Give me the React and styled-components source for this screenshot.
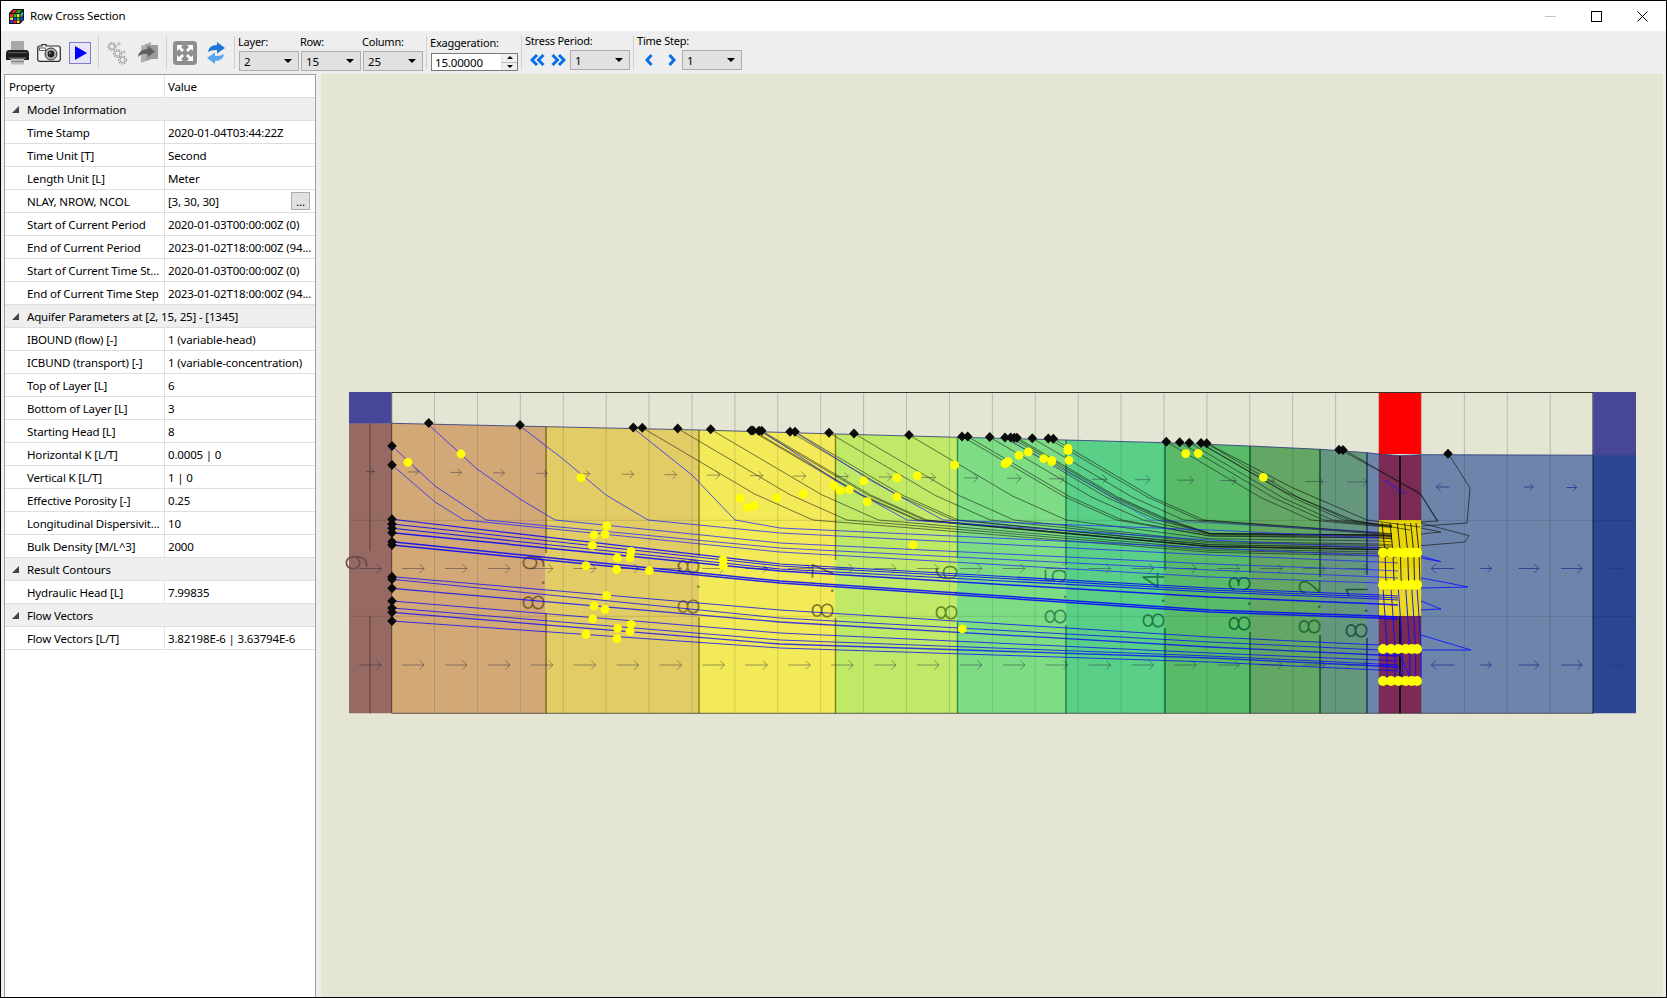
import React from "react";
import styled, { createGlobalStyle } from "styled-components";

const rows = [
  { cat: "Model Information" },
  { k: "Time Stamp", v: "2020-01-04T03:44:22Z" },
  { k: "Time Unit [T]", v: "Second" },
  { k: "Length Unit [L]", v: "Meter" },
  { k: "NLAY, NROW, NCOL", v: "[3, 30, 30]", more: true },
  { k: "Start of Current Period", v: "2020-01-03T00:00:00Z (0)" },
  { k: "End of Current Period", v: "2023-01-02T18:00:00Z (94..." },
  { k: "Start of Current Time St...", v: "2020-01-03T00:00:00Z (0)" },
  { k: "End of Current Time Step", v: "2023-01-02T18:00:00Z (94..." },
  { cat: "Aquifer Parameters at [2, 15, 25] - [1345]" },
  { k: "IBOUND (flow) [-]", v: "1 (variable-head)" },
  { k: "ICBUND (transport) [-]", v: "1 (variable-concentration)" },
  { k: "Top of Layer [L]", v: "6" },
  { k: "Bottom of Layer [L]", v: "3" },
  { k: "Starting Head [L]", v: "8" },
  { k: "Horizontal K [L/T]", v: "0.0005 | 0" },
  { k: "Vertical K [L/T]", v: "1 | 0" },
  { k: "Effective Porosity [-]", v: "0.25" },
  { k: "Longitudinal Dispersivit...", v: "10" },
  { k: "Bulk Density [M/L^3]", v: "2000" },
  { cat: "Result Contours" },
  { k: "Hydraulic Head [L]", v: "7.99835" },
  { cat: "Flow Vectors" },
  { k: "Flow Vectors [L/T]", v: "3.82198E-6 | 3.63794E-6" },
];

// chart geometry, in page pixels
const X0 = 348.7;
const CW = 42.91;
const colX = (i) => X0 + CW * i;
const BOTTOM = 713.3;
const TOP = 392;

const profile = [
  [392, 423.3], [546.7, 426.7], [700, 430], [836.7, 434], [957.7, 437.3], [1066, 440], [1165, 442.7],
  [1250, 446], [1320, 449.3], [1367, 452.7], [1379, 454], [1400, 455.7], [1421, 454.7], [1636, 455.3],
];

const interp = (pts, x) => {
  if (x <= pts[0][0]) return pts[0][1];
  for (let i = 1; i < pts.length; i++) {
    if (x <= pts[i][0]) {
      const [x1, y1] = pts[i - 1];
      const [x2, y2] = pts[i];
      return y1 + ((y2 - y1) * (x - x1)) / (x2 - x1);
    }
  }
  return pts[pts.length - 1][1];
};
const topY = (x) => interp(profile, x);

const zones = [
  { a: 392, b: 545.5, c: "#d3a877" },
  { a: 545.5, b: 699, c: "#e2cc66" },
  { a: 699, b: 835, c: "#f2ea58" },
  { a: 835, b: 957, c: "#c0e968" },
  { a: 957, b: 1066, c: "#7edc85" },
  { a: 1066, b: 1165, c: "#59cf87" },
  { a: 1165, b: 1250, c: "#59bb69" },
  { a: 1250, b: 1320, c: "#62a763" },
  { a: 1320, b: 1367, c: "#65977f" },
  { a: 1367, b: 1379, c: "#6d85ab" },
  { a: 1379, b: 1421, c: "#7a2a55" },
  { a: 1421, b: 1593, c: "#6d85ab" },
  { a: 1593, b: 1636, c: "#2b4690" },
];

const zonePoly = (a, b) => {
  const inner = profile.filter((p) => p[0] > a && p[0] < b);
  const top = [[a, topY(a)], ...inner, [b, topY(b)]];
  return [...top, [b, BOTTOM], [a, BOTTOM]].map((p) => p.join(",")).join(" ");
};

const bounds = [
  { x: 370, g0: 551, g1: 616, c: "#6f4a45" },
  { x: 546, g0: 553, g1: 613, c: "#7d5a20" },
  { x: 699, g0: 556, g1: 617, c: "#8a7a20" },
  { x: 835.5, g0: 560, g1: 618, c: "#7d7d10" },
  { x: 957.5, g0: 558, g1: 622, c: "#3a8a45" },
  { x: 1066, g0: 565, g1: 625, c: "#1f7a40" },
  { x: 1165, g0: 570, g1: 628, c: "#0f6a35" },
  { x: 1250, g0: 573, g1: 632, c: "#0f5a25" },
  { x: 1320, g0: 577, g1: 635, c: "#0f4a25" },
  { x: 1367, g0: 575, g1: 638, c: "#103a55" },
];

const labels = [
  { t: "9", x: 357, y: 558, c: "#6f4a45" },
  { t: "8.9", x: 533.5, y: 578, c: "#7d5a30" },
  { t: "8.8", x: 688.5, y: 582, c: "#857425" },
  { t: "8.7", x: 822.5, y: 586, c: "#7a7a20" },
  { t: "8.6", x: 946.5, y: 588, c: "#5a8a20" },
  { t: "8.5", x: 1055.5, y: 592, c: "#2f8a55" },
  { t: "8.4", x: 1153.5, y: 596, c: "#1f7a45" },
  { t: "8.3", x: 1239.5, y: 599, c: "#0f6a35" },
  { t: "8.2", x: 1309.5, y: 602, c: "#1f6a35" },
  { t: "8.1", x: 1356.5, y: 606, c: "#1f5040" },
];

const arrowList = () => {
  const out = [];
  const shallow = [8, 11, 11, 11, 11, 10, 12, 12, 13, 13, 13, 12, 13, 15, 14, 14, 15, 15, 15, 16, 16, 6, 18, 20];
  shallow.forEach((len, i) => out.push({ i, y: 471.5 + 0.0106 * (colX(i) - 350), len, dir: 1 }));
  [568.5, 665].forEach((y) => {
    for (let i = 0; i < 24; i++) out.push({ i, y, len: 22, dir: 1 });
    out.push({ i: 25, y, len: 23, dir: -1 });
    out.push({ i: 26, y, len: 11, dir: 1 });
    out.push({ i: 27, y, len: 20, dir: 1 });
    out.push({ i: 28, y, len: 21, dir: 1 });
    out.push({ i: 29, y, len: 17, dir: 1 });
  });
  out.push({ i: 25, y: 487, len: 13, dir: -1 });
  out.push({ i: 27, y: 487, len: 9, dir: 1 });
  out.push({ i: 28, y: 487.5, len: 10, dir: 1 });
  out.push({ i: 29, y: 488, len: 6, dir: 1 });
  return out;
};

const leftStarts = [446, 465, 519.3, 524, 528.3, 532.7, 541.7, 545, 576.7, 579.3, 588.3, 601, 608, 612.3, 621];

const topDiamonds = [
  428.7, 520, 633.3, 642.3, 677.7, 710.7, 751, 753, 759, 761.7, 790, 795, 829, 854, 909, 962, 967.7, 989.7, 1005,
  1010.7, 1014.3, 1017, 1032.3, 1048.3, 1053.3, 1166.3, 1179.7, 1189.3, 1201, 1206.7, 1339, 1343, 1448,
];

const dots = [
  [408, 462.3], [461, 454], [581, 477.7], [740.3, 498.3], [747.3, 507.3], [754.3, 505.7], [776.7, 497.7],
  [606.7, 525.7], [594, 535], [605, 534.3], [592.3, 545.3], [631, 551.3], [630, 557.7], [617.3, 558],
  [586, 565.7], [616.7, 569.3], [649.3, 570.7], [723, 560], [723.3, 566],
  [606.7, 595.3], [594, 606], [605, 609.3], [592.7, 619], [631, 624.3], [630, 631.3], [617.7, 628.3],
  [586, 634.3], [617, 638.7],
  [803.3, 494], [834, 485.7], [840, 490.7], [849.3, 489.7], [863.7, 481], [867.3, 501.7], [897, 477.7], [897, 497],
  [917.3, 475.7], [954.7, 465], [913, 545], [962.3, 629], [1005, 463.7], [1008, 461.7], [1019, 455.3], [1028.3, 452],
  [1043.7, 458.7], [1051.7, 460.3], [1051.7, 461.7], [1068, 448.3], [1068, 450.7], [1069, 460.3], [1185.7, 453.7],
  [1198.3, 453.3], [1263.3, 477.3],
];

const wellX = [1383, 1391, 1398.3, 1405.7, 1411.7, 1417];
const wellY = [552.7, 584.7, 649, 681];

const pts = (list) => list.map((p) => p.join(",")).join(" ");

// a long flow line, from its readings at x=780, x=1210 and x=1379, ending inside the well column
const longRun = (head, a, b, c) => [...head, [780, a], [1210, b], [1379, c], [1398, c + 1]];

const upperThin = [
  longRun([[392, 465], [435, 502], [464, 520]], 552, 577, 583),
  longRun([[392, 446], [435, 486], [486, 520]], 548, 570, 577),
  longRun([[429, 425], [477, 469], [520, 499], [555, 520]], 543, 564, 570),
  longRun([[520, 426], [563, 459], [606, 495], [648, 520]], 533, 555, 562),
  longRun([[633, 428], [692, 475], [735, 520]], 528, 548, 556),
];

const thick = [
  longRun([[392, 519.3]], 564, 588, 595),
  longRun([[392, 524]], 566, 590, 597),
  longRun([[392, 528.3]], 569, 592, 599),
  longRun([[392, 532.7]], 571, 597, 604),
  longRun([[392, 541.7]], 581, 610, 616),
  longRun([[392, 545]], 583, 612, 618),
];

const lower = [
  longRun([[392, 576.7]], 610, 637, 645),
  longRun([[392, 579.3]], 618, 642, 650),
  longRun([[392, 588.3]], 622, 647, 655),
  longRun([[392, 601]], 633, 653, 660),
  longRun([[392, 608]], 640, 656, 664),
  longRun([[392, 612.3]], 644, 658, 666),
  longRun([[392, 621]], 648, 662, 670),
];

const blackLines = topDiamonds
  .filter((x) => x > 640 && x < 1300)
  .map((x0) => {
    const y0 = topY(x0) - 1;
    const dy = 520 - y0;
    const k = dy * 1.85;
    const yEnd = 556 - ((x0 - 640) / 570) * 32;
    const line = [
      [x0, y0],
      [x0 + 0.33 * k, y0 + 0.36 * dy],
      [x0 + 0.66 * k, y0 + 0.72 * dy],
      [x0 + k, 520],
    ];
    if (x0 + k < 1180) line.push([1210, 520 + (yEnd - 520) * 0.9]);
    line.push([1379, yEnd], [1392, yEnd + 1]);
    return line;
  });

const blackRight = [
  [[1448, 453], [1470, 488], [1467, 523], [1422, 526]],
  [[1343, 449], [1421, 495], [1438, 521], [1421, 522]],
  [[1339, 449], [1420, 493], [1437, 521]],
  [[1421, 545.7], [1465, 542], [1469, 535.7], [1421, 523]],
  [[1421, 528], [1441, 532], [1421, 534]],
  [[1206, 443], [1293, 488], [1367, 520], [1420, 527]],
  [[1201, 444], [1285, 492], [1355, 521], [1410, 530]],
];

const blueSpikes = [
  [[1421, 556], [1441, 561.7], [1421, 558]],
  [[1421, 578], [1443, 582], [1468, 587], [1421, 588]],
  [[1421, 601], [1441, 609], [1421, 610]],
  [[1421, 635], [1471, 650], [1421, 650]],
  [[1385, 480], [1405, 494]],
  [[1379, 651], [1400, 655], [1409, 675]],
  [[1379, 665], [1398, 667], [1403, 678]],
];

const Chart = () => (
  <ChartSvg viewBox="321 74 1342 923">
    {zones.map((z) => (
      <polygon key={z.a} points={zonePoly(z.a, z.b)} fill={z.c} />
    ))}
    <polygon points={zonePoly(349, 392)} fill="#966a62" />
    <rect x="349" y={TOP} width="43" height="31.5" fill="#474698" />
    <rect x="1593" y={TOP} width="43" height="63" fill="#474698" />
    <rect x="1379" y={TOP} width="42.4" height="62" fill="#ff0000" />
    <rect x="1379" y="520" width="42.4" height="96" fill="#e8d608" />
    <rect x="1379" y="568" width="42.4" height="48" fill="#ffffff" opacity="0.1" />

    {Array.from({ length: 29 }, (_, n) => n + 1).map((n) => (
      <g key={n}>
        <line x1={colX(n)} x2={colX(n)} y1={TOP} y2={topY(colX(n))} stroke="#b9b9ae" />
        <line x1={colX(n)} x2={colX(n)} y1={topY(colX(n))} y2={BOTTOM} stroke="#000" strokeOpacity="0.13" />
      </g>
    ))}
    <line x1="349" x2="1636" y1="520.3" y2="520.3" stroke="#000" strokeOpacity="0.12" />
    <line x1="349" x2="1636" y1="616.3" y2="616.3" stroke="#000" strokeOpacity="0.12" />

    <line x1="1400" x2="1400" y1="456" y2="520" stroke="#111" strokeWidth="2" />
    <line x1="1400" x2="1400" y1="616" y2={BOTTOM} stroke="#111" strokeWidth="2" />

    {bounds.map((b) => (
      <g key={b.x} stroke={b.c} strokeWidth="1.4">
        <line x1={b.x} x2={b.x} y1={topY(b.x)} y2={b.g0} />
        <line x1={b.x} x2={b.x} y1={b.g1} y2={BOTTOM} />
      </g>
    ))}
    {labels.map((l) => (
      <ContourLabel key={l.t} transform={`translate(${l.x} ${l.y}) rotate(-90)`} fill={l.c} stroke={l.c}>
        {l.t}
      </ContourLabel>
    ))}

    {arrowList().map((a, n) => {
      const xc = colX(a.i) + CW / 2;
      const tail = xc - (a.dir * a.len) / 2;
      const tip = xc + (a.dir * a.len) / 2;
      const h = Math.min(4.5, a.len / 3);
      return (
        <path
          key={n}
          d={`M${tail} ${a.y}L${tip} ${a.y}M${tip - a.dir * h} ${a.y - h}L${tip} ${a.y}L${tip - a.dir * h} ${a.y + h}`}
          fill="none"
          stroke={a.i > 24 ? "#25388f" : "#1c1c3c"}
          strokeOpacity={a.i > 24 ? 0.85 : 0.42}
        />
      );
    })}

    <polyline points={pts(profile)} fill="none" stroke="#1d2a74" strokeOpacity="0.75" />
    <rect x="392" y={TOP} width="1201" height="1" fill="#33332c" />
    <line x1="391.7" x2="391.7" y1={TOP} y2={BOTTOM} stroke="#3d3a36" strokeOpacity="0.7" />
    <line x1="1593" x2="1593" y1={TOP} y2={BOTTOM} stroke="#1c2350" />
    <line x1="392" x2="1593" y1={BOTTOM} y2={BOTTOM} stroke="#333" strokeOpacity="0.75" />

    {blackLines.map((l, n) => (
      <polyline key={n} points={pts(l)} fill="none" stroke="#111" strokeOpacity="0.75" strokeWidth="0.75" />
    ))}
    {blackRight.map((l, n) => (
      <polyline key={n} points={pts(l)} fill="none" stroke="#111" strokeOpacity="0.8" strokeWidth="0.8" />
    ))}
    {wellX.map((x) => (
      <g key={x}>
        <polyline points={pts([[x - 1, 523], [x + 2, 552], [x + 3, 585]])} fill="none" stroke="#111" strokeWidth="0.9" />
        <polyline points={pts([[x, 588], [x + 2, 616], [x + 4, 649], [x + 4, 681]])} fill="none" stroke="#0a0aff" strokeWidth="0.9" />
      </g>
    ))}
    {upperThin.map((l, n) => (
      <polyline key={n} points={pts(l)} fill="none" stroke="#2222ff" strokeOpacity="0.85" strokeWidth="0.9" />
    ))}
    <polyline points={pts([[795, 432], [870, 480], [943, 520], [1210, 530], [1379, 538]])} fill="none" stroke="#2222ff" strokeOpacity="0.8" strokeWidth="0.9" />
    <polyline points={pts([[1010, 441], [1100, 490], [1150, 520], [1210, 523], [1379, 532]])} fill="none" stroke="#2222ff" strokeOpacity="0.5" strokeWidth="0.9" />
    <polyline points={pts([[762, 431], [835, 480], [907, 520], [1210, 540], [1379, 548]])} fill="none" stroke="#2222ff" strokeOpacity="0.8" strokeWidth="0.9" />
    {thick.map((l, n) => (
      <polyline key={n} points={pts(l)} fill="none" stroke="#0000ff" strokeWidth={n > 2 ? 1.5 : 1.1} strokeOpacity="0.85" />
    ))}
    {lower.map((l, n) => (
      <polyline key={n} points={pts(l)} fill="none" stroke="#0000ff" strokeWidth={n % 3 === 2 ? 1.3 : 1} strokeOpacity="0.75" />
    ))}
    {blueSpikes.map((l, n) => (
      <polyline key={n} points={pts(l)} fill="none" stroke="#1414ff" strokeWidth="0.9" />
    ))}

    {topDiamonds.map((x) => (
      <polygon key={x} points={`${x},${topY(x) - 6} ${x + 4.8},${topY(x) - 1} ${x},${topY(x) + 4} ${x - 4.8},${topY(x) - 1}`} fill="#0a0a0a" />
    ))}
    {leftStarts.map((y) => (
      <polygon key={y} points={`392,${y - 5} 396.8,${y} 392,${y + 5} 387.2,${y}`} fill="#0a0a0a" />
    ))}
    {dots.map(([x, y], n) => (
      <circle key={n} cx={x} cy={y} r="4.4" fill="#ffff00" />
    ))}
    {wellY.map((y) =>
      wellX.map((x) => <circle key={`${x}-${y}`} cx={x} cy={y} r="5" fill="#ffff00" />)
    )}
  </ChartSvg>
);

const CubeIcon = () => (
  <TitleIcon viewBox="0 0 17 17">
    <path d="M1 5 L5 1 H16 V12 L12 16 H1 Z" fill="#111" />
    <rect x="2" y="6" width="3" height="3" fill="#ff2020" />
    <rect x="5.5" y="6" width="3" height="3" fill="#22c020" />
    <rect x="9" y="6" width="2.5" height="3" fill="#f0e020" />
    <rect x="2" y="9.5" width="3" height="2.5" fill="#f0e020" />
    <rect x="5.5" y="9.5" width="3" height="2.5" fill="#2040e0" />
    <rect x="9" y="9.5" width="2.5" height="2.5" fill="#22c020" />
    <rect x="2" y="12.5" width="3" height="2.5" fill="#2040e0" />
    <rect x="5.5" y="12.5" width="3" height="2.5" fill="#ff2020" />
    <rect x="9" y="12.5" width="2.5" height="2.5" fill="#f0e020" />
    <path d="M3 5 L6 2 H9 L6 5 Z" fill="#ff2020" />
    <path d="M7 5 L10 2 H14 L11.5 5 Z" fill="#20a020" />
    <path d="M12.5 6 L15 3.5 V7 L12.5 9.5 Z" fill="#20c0c0" />
    <path d="M12.5 10.5 L15 8 V11.5 L12.5 14 Z" fill="#2040e0" />
  </TitleIcon>
);

const PrinterIcon = () => (
  <svg width="23" height="24" viewBox="0 0 23 24">
    <rect x="5" y="0" width="13" height="11" fill="#a9a9a9" />
    <path d="M3 9 H20 Q23 9 23 13 V19 H0 V13 Q0 9 3 9 Z" fill="#1d1d1d" />
    <rect x="2" y="11" width="19" height="1.2" fill="#555" />
    <rect x="5" y="18" width="13" height="5.5" fill="#bcbcbc" />
    <rect x="5" y="20" width="13" height="1" fill="#808080" />
    <rect x="3" y="16.5" width="17" height="1.5" fill="#6a6a6a" />
  </svg>
);

const CameraIcon = () => (
  <svg width="24" height="19" viewBox="0 0 24 19">
    <path d="M3 3 H5 V1.5 H9 V3 H21 Q23.3 3 23.3 5 V16 Q23.3 18.3 21 18.3 H3 Q0.7 18.3 0.7 16 V5 Q0.7 3 3 3 Z" fill="#f4f4f4" stroke="#2a2a2a" strokeWidth="1.2" />
    <rect x="2.5" y="5" width="6" height="2.4" fill="#fff" stroke="#444" strokeWidth="0.8" />
    <circle cx="14" cy="11" r="6" fill="#b5b5b5" stroke="#333" />
    <circle cx="14" cy="11" r="3.4" fill="#222" />
    <circle cx="13" cy="10" r="1" fill="#999" />
  </svg>
);

const GearsIcon = () => (
  <svg width="20" height="24" viewBox="0 0 20 24">
    <g fill="none" stroke="#9a9a9a">
      <circle cx="5" cy="5.5" r="2.6" />
      <circle cx="5" cy="5.5" r="4" strokeDasharray="1.6 1.2" strokeWidth="1.2" />
      <circle cx="10.5" cy="12.5" r="2.6" />
      <circle cx="10.5" cy="12.5" r="4" strokeDasharray="1.6 1.2" strokeWidth="1.2" />
      <circle cx="15.5" cy="19" r="2.6" />
      <circle cx="15.5" cy="19" r="4" strokeDasharray="1.6 1.2" strokeWidth="1.2" />
      <path d="M10 3 H14 M12 1 V5" stroke="#b5b5b5" />
      <path d="M15 11 H19 M17 9 V13" stroke="#b5b5b5" />
    </g>
  </svg>
);

const ExportIcon = () => (
  <svg width="21" height="23" viewBox="0 0 21 23">
    <path d="M4 5 L14 1 V18 L4 22 Z" fill="#b0b0b0" />
    <path d="M9 4 H21 V18 H14 L9 20 Z" fill="#9b9b9b" />
    <path d="M1 16 Q2 8 11 8 V5 L18 10.5 L11 16 V13 Q5 12 1 16 Z" fill="#5f5f5f" />
  </svg>
);

const FitIcon = () => (
  <svg width="24" height="24" viewBox="0 0 24 24">
    <rect width="24" height="24" rx="3.5" fill="#8e8e8e" />
    <g fill="#fff">
      <path d="M4 4 H10 L8 6 L11 9 L9 11 L6 8 L4 10 Z" />
      <path d="M20 4 V10 L18 8 L15 11 L13 9 L16 6 L14 4 Z" />
      <path d="M4 20 V14 L6 16 L9 13 L11 15 L8 18 L10 20 Z" />
      <path d="M20 20 H14 L16 18 L13 15 L15 13 L18 16 L20 14 Z" />
    </g>
  </svg>
);

const RefreshIcon = () => (
  <svg width="18" height="22" viewBox="0 0 18 22">
    <path d="M1 10 Q2 3 10 3 V0 L18 6 L10 11.5 V8 Q5 7.5 1 10 Z" fill="#1f74d8" />
    <path d="M17 12 Q16 19 8 19 V22 L0 16 L8 10.5 V14 Q13 14.5 17 12 Z" fill="#58a4ee" />
  </svg>
);

const DoubleLeft = () => (
  <svg width="15" height="12" viewBox="0 0 15 12">
    <path d="M7 1 L2 6 L7 11 M13.5 1 L8.5 6 L13.5 11" fill="none" stroke="#0b6fe8" strokeWidth="3" />
  </svg>
);

const DoubleRight = () => (
  <svg width="15" height="12" viewBox="0 0 15 12">
    <path d="M1.5 1 L6.5 6 L1.5 11 M8 1 L13 6 L8 11" fill="none" stroke="#0b6fe8" strokeWidth="3" />
  </svg>
);

const SingleLeft = () => (
  <svg width="8" height="12" viewBox="0 0 8 12">
    <path d="M6.5 1 L2 6 L6.5 11" fill="none" stroke="#0b6fe8" strokeWidth="3" />
  </svg>
);

const SingleRight = () => (
  <svg width="8" height="12" viewBox="0 0 8 12">
    <path d="M1.5 1 L6 6 L1.5 11" fill="none" stroke="#0b6fe8" strokeWidth="3" />
  </svg>
);

const App = () => {
  return (
    <>
      <GlobalStyle />
      <Window>
        <TitleBar>
          <CubeIcon />
          <TitleText>Row Cross Section</TitleText>
          <WindowButtons>
            <WinBtn>
              <svg width="11" height="11"><rect x="0" y="5" width="11" height="1" fill="#c4c4c4" /></svg>
            </WinBtn>
            <WinBtn>
              <svg width="11" height="11"><rect x="0.5" y="0.5" width="10" height="10" fill="none" stroke="#000" /></svg>
            </WinBtn>
            <WinBtn>
              <svg width="11" height="11"><path d="M0.5 0.5 L10.5 10.5 M10.5 0.5 L0.5 10.5" stroke="#000" fill="none" /></svg>
            </WinBtn>
          </WindowButtons>
        </TitleBar>

        <Toolbar>
          <ToolSlot $left={0}><PrinterIcon /></ToolSlot>
          <ToolSlot $left={8}><CameraIcon /></ToolSlot>
          <PlayButton>
            <svg width="12" height="14" viewBox="0 0 12 14"><path d="M0 0 L12 7 L0 14 Z" fill="#0000ff" /></svg>
          </PlayButton>
          <Separator $left={7} />
          <ToolSlot $left={8}><GearsIcon /></ToolSlot>
          <ToolSlot $left={10}><ExportIcon /></ToolSlot>
          <Separator $left={8} />
          <ToolSlot $left={6}><FitIcon /></ToolSlot>
          <ToolSlot $left={10}><RefreshIcon /></ToolSlot>
          <Separator $left={9} />
          <Field $left={4} $top={4}>
            <FieldLabel>Layer:</FieldLabel>
            <Combo>2<Caret /></Combo>
          </Field>
          <Field $left={2} $top={4}>
            <FieldLabel>Row:</FieldLabel>
            <Combo>15<Caret /></Combo>
          </Field>
          <Field $left={2} $top={4}>
            <FieldLabel>Column:</FieldLabel>
            <Combo>25<Caret /></Combo>
          </Field>
          <Separator $left={3} />
          <Field $left={4} $top={5}>
            <FieldLabel $tight>Exaggeration:</FieldLabel>
            <SpinBox>
              <SpinValue>15.00000</SpinValue>
              <SpinArrows>
                <SpinArrow $up />
                <SpinArrow />
              </SpinArrows>
            </SpinBox>
          </Field>
          <Separator $left={3} />
          <Field $left={4} $top={3}>
            <FieldLabel>Stress Period:</FieldLabel>
            <StepRow>
              <StepIcon $left={4}><DoubleLeft /></StepIcon>
              <StepIcon $left={6}><DoubleRight /></StepIcon>
              <Combo $left={4}>1<Caret /></Combo>
            </StepRow>
          </Field>
          <Separator $left={3} />
          <Field $left={4} $top={3}>
            <FieldLabel>Time Step:</FieldLabel>
            <StepRow>
              <StepIcon $left={7}><SingleLeft /></StepIcon>
              <StepIcon $left={15}><SingleRight /></StepIcon>
              <Combo $left={6}>1<Caret /></Combo>
            </StepRow>
          </Field>
        </Toolbar>

        <Body>
          <PropertyPanel>
            <PropRow>
              <KeyCell $header>Property</KeyCell>
              <ValueCell>Value</ValueCell>
            </PropRow>
            {rows.map((r) =>
              r.cat ? (
                <CategoryRow key={r.cat}>
                  <Expander />
                  {r.cat}
                </CategoryRow>
              ) : (
                <PropRow key={r.k}>
                  <KeyCell>{r.k}</KeyCell>
                  <ValueCell>
                    {r.v}
                    {r.more && <MoreButton>...</MoreButton>}
                  </ValueCell>
                </PropRow>
              )
            )}
          </PropertyPanel>
          <Canvas>
            <Chart />
          </Canvas>
        </Body>
      </Window>
    </>
  );
};

const GlobalStyle = createGlobalStyle`
  html, body {
    margin: 0;
    padding: 0;
    overflow: hidden;
    background: #fff;
  }
`;

const Window = styled.div`
  width: 1667px;
  height: 998px;
  box-sizing: border-box;
  border: 1px solid #000;
  display: flex;
  flex-direction: column;
  background: #eeeeee;
  font-family: "Noto Sans", sans-serif;
  font-size: 11.5px;
  letter-spacing: -0.16px;
  color: #000;
`;

const TitleBar = styled.div`
  height: 30px;
  flex: none;
  background: #fff;
  display: flex;
  align-items: center;
  padding-left: 7px;
`;

const TitleIcon = styled.svg`
  width: 17px;
  height: 17px;
`;

const TitleText = styled.span`
  margin: -2px 0 0 5px;
`;

const WindowButtons = styled.div`
  margin-left: auto;
  display: flex;
  margin-right: 1px;
`;

const WinBtn = styled.div`
  width: 46px;
  height: 30px;
  display: flex;
  align-items: center;
  justify-content: center;
`;

const Toolbar = styled.div`
  height: 43px;
  flex: none;
  display: flex;
  align-items: center;
  padding-left: 5px;
`;

const ToolSlot = styled.div`
  margin-left: ${(p) => p.$left}px;
  display: flex;
  align-items: center;
`;

const PlayButton = styled.div`
  margin-left: 8px;
  width: 22px;
  height: 22px;
  box-sizing: border-box;
  border: 1px solid #7f7fc9;
  background: #e6e6f6;
  display: flex;
  align-items: center;
  justify-content: center;
  padding-left: 1px;
`;

const Separator = styled.div`
  margin-left: ${(p) => p.$left}px;
  width: 1px;
  height: 33px;
  background: #d0d0d0;
`;

const Field = styled.div`
  margin-left: ${(p) => p.$left}px;
  align-self: flex-start;
  margin-top: ${(p) => p.$top}px;
  display: flex;
  flex-direction: column;
`;

const FieldLabel = styled.div`
  height: ${(p) => (p.$tight ? 17 : 16)}px;
  line-height: 14px;
  font-size: 11px;
  letter-spacing: -0.22px;
  margin-left: -1px;
  white-space: nowrap;
`;

const Combo = styled.div`
  margin-left: ${(p) => p.$left || 0}px;
  width: 60px;
  height: 20px;
  box-sizing: border-box;
  border: 1px solid #adadad;
  background: #e1e1e1;
  display: flex;
  align-items: center;
  justify-content: space-between;
  padding: 0 6px 0 4px;
`;

const Caret = styled.span`
  width: 0;
  height: 0;
  border-left: 4px solid transparent;
  border-right: 4px solid transparent;
  border-top: 4px solid #000;
`;

const SpinBox = styled.div`
  width: 87px;
  height: 18px;
  box-sizing: border-box;
  border: 1px solid #7a7a7a;
  background: #fff;
  display: flex;
  align-items: center;
  justify-content: space-between;
`;

const SpinValue = styled.span`
  padding-left: 3px;
`;

const SpinArrows = styled.div`
  width: 15px;
  height: 100%;
  display: flex;
  flex-direction: column;
  background: #f0f0f0;
  border-left: 1px solid #e0e0e0;
`;

const SpinArrow = styled.div`
  flex: 1;
  display: flex;
  align-items: center;
  justify-content: center;
  border-bottom: ${(p) => (p.$up ? "1px solid #bbb" : "0")};

  &::after {
    content: "";
    border-left: 3px solid transparent;
    border-right: 3px solid transparent;
    ${(p) => (p.$up ? "border-bottom: 3px solid #000;" : "border-top: 3px solid #000;")}
  }
`;

const StepRow = styled.div`
  display: flex;
  align-items: center;
`;

const StepIcon = styled.div`
  margin-left: ${(p) => p.$left}px;
  display: flex;
`;

const Body = styled.div`
  flex: 1;
  min-height: 0;
  display: flex;
  padding: 0 3px;
  gap: 5px;
`;

const PropertyPanel = styled.div`
  width: 312px;
  flex: none;
  box-sizing: border-box;
  border: 1px solid #a0a0a0;
  border-bottom: 0;
  background: #fff;
`;

const PropRow = styled.div`
  height: 23px;
  box-sizing: border-box;
  border-bottom: 1px solid #dedede;
  display: flex;
`;

const KeyCell = styled.div`
  width: 160px;
  flex: none;
  box-sizing: border-box;
  padding-left: ${(p) => (p.$header ? 4 : 22)}px;
  border-right: 1px solid #e2e2e2;
  line-height: 24px;
  white-space: nowrap;
  overflow: hidden;
`;

const ValueCell = styled.div`
  flex: 1;
  min-width: 0;
  padding-left: 3px;
  line-height: 24px;
  white-space: nowrap;
  display: flex;
  justify-content: space-between;
`;

const CategoryRow = styled.div`
  height: 23px;
  box-sizing: border-box;
  background: #efefef;
  border-bottom: 1px solid #dedede;
  display: flex;
  align-items: center;
`;

const Expander = styled.span`
  margin: 0 8px 0 7px;
  width: 0;
  height: 0;
  border-left: 7px solid transparent;
  border-bottom: 7px solid #444;
`;

const MoreButton = styled.div`
  margin: 2px 5px 0 0;
  width: 19px;
  height: 18px;
  box-sizing: border-box;
  border: 1px solid #adadad;
  background: #e1e1e1;
  line-height: 18px;
  text-align: center;
`;

const Canvas = styled.div`
  flex: 1;
  min-width: 0;
  background: #e5e5d3;
`;

const ChartSvg = styled.svg`
  display: block;
  width: 100%;
  height: 100%;
`;

const ContourLabel = styled.text`
  font-family: "Roboto", "Liberation Sans", sans-serif;
  font-weight: 100;
  font-size: 29px;
  letter-spacing: 9px;
  text-anchor: middle;
  dominant-baseline: central;
  stroke-width: 0.7;
`;

export default App;
